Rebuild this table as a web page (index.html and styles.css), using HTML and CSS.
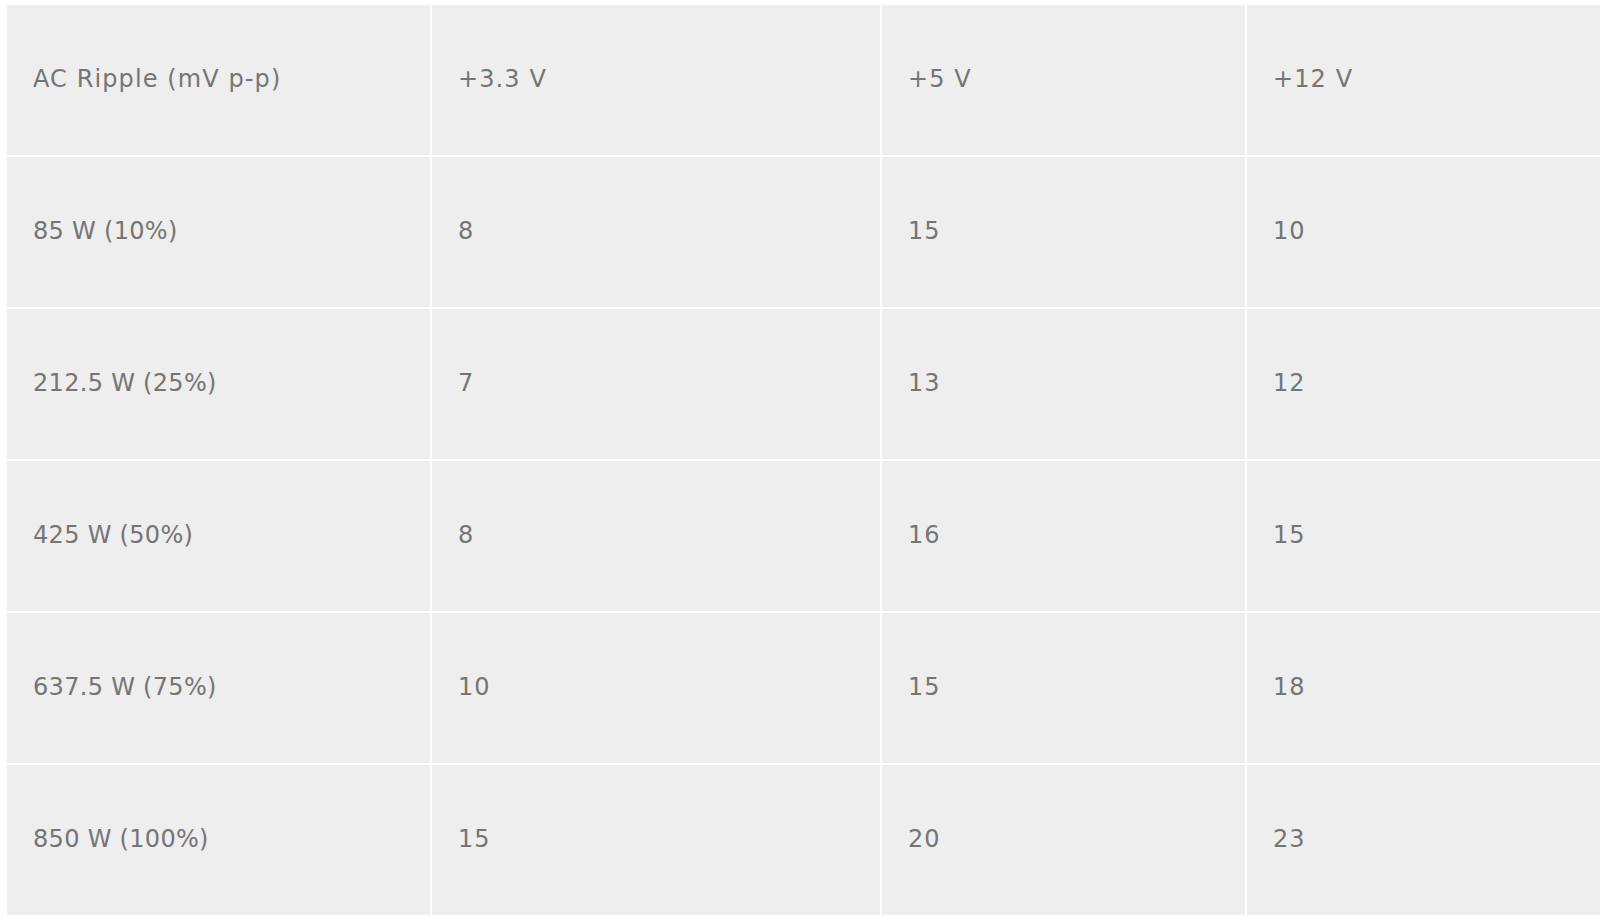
FILE: index.html
```html
<!DOCTYPE html>
<html>
<head>
<meta charset="utf-8">
<link rel="stylesheet" href="styles.css">
</head>
<body>
<div class="table">
  <div class="cell">AC Ripple (mV p-p)</div><div class="cell">+3.3 V</div><div class="cell">+5 V</div><div class="cell">+12 V</div>
  <div class="cell load">85 W (10%)</div><div class="cell">8</div><div class="cell">15</div><div class="cell">10</div>
  <div class="cell load">212.5 W (25%)</div><div class="cell">7</div><div class="cell">13</div><div class="cell">12</div>
  <div class="cell load">425 W (50%)</div><div class="cell">8</div><div class="cell">16</div><div class="cell">15</div>
  <div class="cell load">637.5 W (75%)</div><div class="cell">10</div><div class="cell">15</div><div class="cell">18</div>
  <div class="cell load">850 W (100%)</div><div class="cell">15</div><div class="cell">20</div><div class="cell">23</div>
</div>
</body>
</html>
```

FILE: styles.css
```css
html, body {
  margin: 0;
  background: #ffffff;
  overflow: hidden;
}
body {
  padding: 5px 0 0 7px;
}
.table {
  display: grid;
  grid-template-columns: 423px 448px 363px 353px;
  grid-auto-rows: 150px;
  gap: 2px;
  background: #ffffff;
  font-family: "DejaVu Sans", sans-serif;
  font-size: 24px;
  color: #757575;
  letter-spacing: 1.1px;
}
.cell {
  background: #eeeeee;
  display: flex;
  align-items: center;
  padding: 0 0 2px 26px;
}
.load {
  letter-spacing: 0.3px;
}
```
